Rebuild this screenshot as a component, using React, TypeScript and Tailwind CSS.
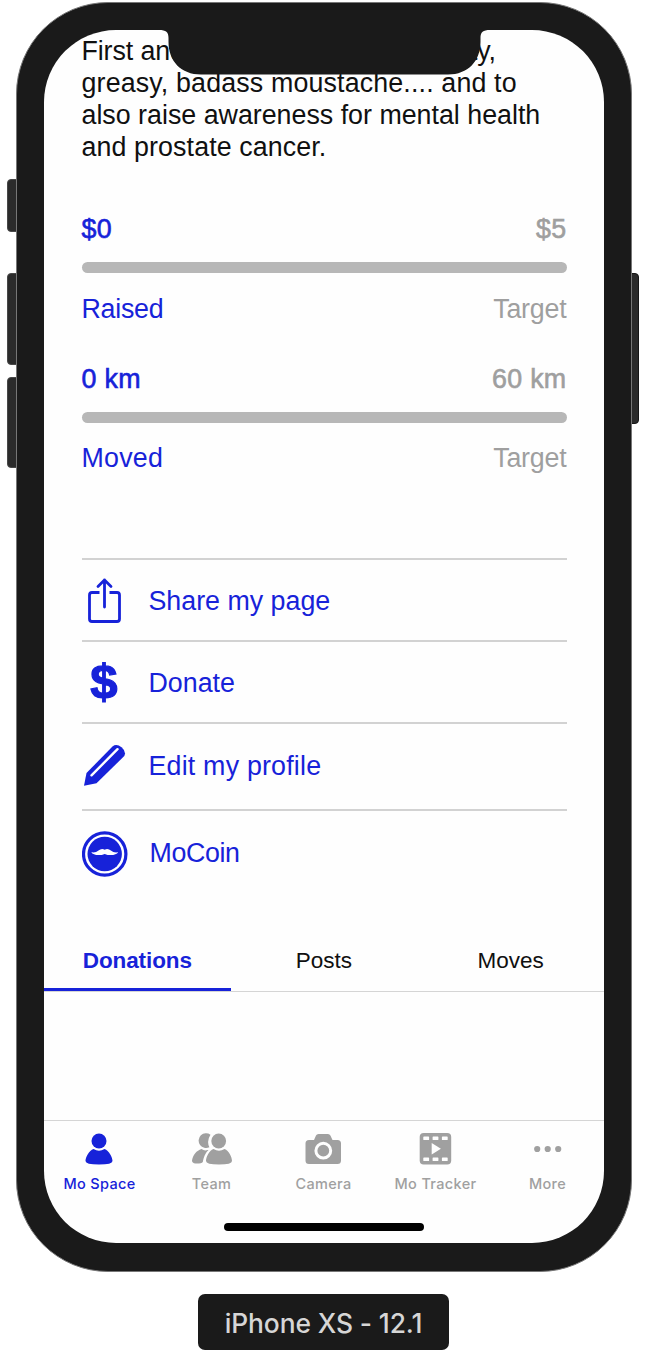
import type { ReactNode } from "react";

function Progress({ value, target, label, labelClass }: { value: string; target: string; label: string; labelClass: string }) {
  return (
    <div>
      <div className="flex h-8 justify-between leading-8 tracking-[0.300px] [-webkit-text-stroke:0.6px_currentColor]">
        <span className="text-[#1722d9]">{value}</span>
        <span className="text-[#9f9f9f]">{target}</span>
      </div>
      <div className="mt-[17px] h-[11px] rounded-full bg-[#b7b7b7]" />
      <div className="mt-[19.500px] flex h-8 justify-between leading-8">
        <span className={"text-[#1722d9] " + labelClass}>{label}</span>
        <span className="tracking-[-0.200px] text-[#9f9f9f]">Target</span>
      </div>
    </div>
  );
}

function Row({ icon, children, className }: { icon: ReactNode; children: ReactNode; className: string }) {
  return (
    <li className={"flex items-center border-t-2 border-[#d2d2d2] leading-8 " + className}>
      <span className="flex w-[67px] shrink-0">{icon}</span>
      <span>{children}</span>
    </li>
  );
}

function ShareIcon() {
  return (
    <svg width="46" height="46" viewBox="0 0 46 46" fill="none" stroke="#1722d9" strokeWidth="2.8" strokeLinecap="round" strokeLinejoin="round">
      <path d="M17.500 14.500H10a2.500 2.500 0 0 0-2.500 2.500V41a2.500 2.500 0 0 0 2.500 2.500h25a2.500 2.500 0 0 0 2.500-2.500V17a2.500 2.500 0 0 0-2.500-2.500H27.500" strokeLinecap="butt" />
      <path d="M22.500 29V2M16 8.500l6.500-6.500L29 8.500" />
    </svg>
  );
}

function PencilIcon() {
  return (
    <svg width="46" height="46" viewBox="0 0 46 46">
      <path d="M2 42.800 4.500 30 30.500 3.500Q34.500.2 39.500 4.300 44.500 8.500 42.300 13L14.500 40.300Z" fill="#1722d9" />
      <path d="M9.500 32.300 35.500 6.200" stroke="#fff" strokeWidth="2.400" strokeLinecap="round" />
    </svg>
  );
}

function CoinIcon() {
  return (
    <svg width="46" height="46" viewBox="0 0 46 46">
      <circle cx="22.700" cy="23" r="21.200" fill="#fff" stroke="#1722d9" strokeWidth="3.200" />
      <circle cx="22.700" cy="23" r="17.200" fill="#1722d9" />
      <path d="M22.700 18.800C20.500 17.600 18.500 18 16.500 19.600 14.500 21.200 12.500 21.700 9.300 21.300 10.800 24.300 18 25 22.700 22.900 27.400 25 34.600 24.300 36.100 21.300 32.900 21.700 30.900 21.200 28.900 19.600 26.900 18 24.900 17.600 22.700 18.800Z" fill="#fff" />
    </svg>
  );
}

function SpaceIcon() {
  return (
    <svg width="44" height="34" viewBox="0 0 44 34" fill="currentColor">
      <circle cx="21" cy="9" r="7.500" />
      <path d="M15.500 17Q21 20.500 26.500 17C31 18.800 34.500 25 34.500 29Q34.500 32.500 21 32.500T7.500 29C7.500 25 11 18.800 15.500 17Z" />
    </svg>
  );
}

function TeamIcon() {
  return (
    <svg width="44" height="34" viewBox="0 0 44 34" fill="currentColor">
      <path d="M20.500 2.700A7.400 7.400 0 1 0 19.400 15.200Q16.300 9 20.500 2.700Z" />
      <circle cx="28.700" cy="9" r="7.400" />
      <path d="M11.500 17Q14.500 19.200 17.500 18L18.500 18C15 21.500 14 24.500 12.800 30Q11.500 31.700 5.500 31.500 2 31.200 2 28.500C3 23 6.500 18.500 11.500 17Z" />
      <path d="M23.500 17Q29 20.500 34.500 17C39 18.800 42 25 42 29Q42 32.500 29 32.500T16 29C16 25 19 18.800 23.500 17Z" />
    </svg>
  );
}

function CameraIcon() {
  return (
    <svg width="44" height="34" viewBox="0 0 44 34">
      <path d="M7 8H12L14 3.500Q14.600 2 16.500 2H26Q27.700 2 28.400 3.500L30.500 8H35.500Q39 8 39 11.500V28.500Q39 32 35.500 32H7Q3.500 32 3.500 28.500V11.500Q3.500 8 7 8Z" fill="currentColor" />
      <circle cx="21.300" cy="18.700" r="7.400" fill="none" stroke="#fefefe" strokeWidth="3" />
    </svg>
  );
}

function FilmIcon() {
  return (
    <svg width="44" height="34" viewBox="0 0 44 34">
      <rect x="5.700" y="1" width="31.500" height="31.500" rx="4" fill="currentColor" />
      <g fill="#fefefe">
        {[9.3, 18.6, 27.900].map((x) => (
          <g key={x}>
            <rect x={x} y="4.400" width="5.800" height="3.700" rx=".7" />
            <rect x={x} y="25.400" width="5.800" height="3.700" rx=".7" />
          </g>
        ))}
        <path d="M17.700 11v11.500L26.900 16.800Z" />
      </g>
    </svg>
  );
}

function MoreIcon() {
  return (
    <svg width="44" height="34" viewBox="0 0 44 34" fill="currentColor">
      <circle cx="11.200" cy="17" r="3.100" />
      <circle cx="21.700" cy="17" r="3.100" />
      <circle cx="32.200" cy="17" r="3.100" />
    </svg>
  );
}

const navigation = [
  { label: "Mo Space", icon: <SpaceIcon />, color: "text-[#1722d9]" },
  { label: "Team", icon: <TeamIcon />, color: "text-[#a0a0a0]" },
  { label: "Camera", icon: <CameraIcon />, color: "text-[#a0a0a0]" },
  { label: "Mo Tracker", icon: <FilmIcon />, color: "text-[#a0a0a0]" },
  { label: "More", icon: <MoreIcon />, color: "text-[#a0a0a0]" },
];

export default function App() {
  return (
    <div className="flex h-[1352px] w-[648px] flex-col items-center overflow-hidden bg-white pt-[2px] font-['Liberation_Sans',Arial,sans-serif]">
      <div className="relative h-[1270px] w-[616px]">
        <div className="absolute top-[177px] -left-[9px] h-[53px] w-4 rounded-[4px] border border-[#484848] bg-[#2b2b2b]" />
        <div className="absolute top-[271px] -left-[9px] h-[92px] w-4 rounded-[4px] border border-[#484848] bg-[#2b2b2b]" />
        <div className="absolute top-[375px] -left-[9px] h-[91px] w-4 rounded-[4px] border border-[#484848] bg-[#2b2b2b]" />
        <div className="absolute top-[271px] -right-[7px] h-[151px] w-4 rounded-[4px] border border-[#161616] bg-[#2b2b2b]" />
        <div className="relative h-full w-full rounded-[92px] border border-[#777] bg-[#1a1a1a] p-[27px]">
          <main className="relative flex h-[1213px] w-[560px] flex-col overflow-hidden rounded-[72px] bg-[#fefefe]">
            <div className="px-[37.500px] pt-[5px] text-[26.800px]">
              <p className="whitespace-nowrap leading-8 text-[#101010]">
                <span className="tracking-[-0.100px]">First and foremost, to grow a nasty,</span>
                <br />
                <span className="tracking-[0.150px]">greasy, badass moustache.... and to</span>
                <br />
                also raise awareness for mental health
                <br />
                <span className="tracking-[0.100px]">and prostate cancer.</span>
              </p>
              <div className="mt-[50px] flex flex-col gap-[38px]">
                <Progress value="$0" target="$5" label="Raised" labelClass="tracking-[-0.250px]" />
                <Progress value="0 km" target="60 km" label="Moved" labelClass="tracking-[0.250px]" />
              </div>
              <ul className="mt-[84px] text-[#1722d9]">
                <Row icon={<ShareIcon />} className="h-[82px] pt-[1px]">Share my page</Row>
                <Row
                  icon={<span className="flex h-[46px] w-[45px] items-center justify-center pb-[3px] text-[49px] font-bold [-webkit-text-stroke:1.200px_currentColor]">$</span>}
                  className="h-[82px] pt-[1px]"
                >
                  Donate
                </Row>
                <Row icon={<PencilIcon />} className="h-[87px] pb-[2px]">
                  <span className="tracking-[0.200px]">Edit my profile</span>
                </Row>
                <Row icon={<CoinIcon />} className="h-[87px] pt-[1px]">
                  <span className="relative -top-[1px] left-[1px] tracking-[-0.400px]">MoCoin</span>
                </Row>
              </ul>
            </div>
            <div className="mt-[33px] grid h-[63px] grid-cols-3 border-b border-[#d5d5d5] text-center text-[22.500px] leading-[63px] text-[#101010]">
              <div className="h-[62px] border-b-[3px] border-[#1722d9] font-bold tracking-[-0.100px] text-[#1722d9]">Donations</div>
              <div className="h-[62px]">Posts</div>
              <div className="h-[62px]">Moves</div>
            </div>
            <nav className="mt-auto grid h-[123px] grid-cols-5 border-t border-[#d5d5d5] pt-[11px] font-['Inter',sans-serif] text-[14.500px] font-medium tracking-[0.350px]">
              {navigation.map(({ label, icon, color }) => (
                <div key={label} className={"flex flex-col items-center whitespace-nowrap " + color}>
                  {icon}
                  <span className="mt-2 -ml-px leading-5">{label}</span>
                </div>
              ))}
            </nav>
            <div className="absolute bottom-3 left-[180px] h-2 w-[200px] rounded-full bg-black" />
            <svg className="absolute top-0 left-[115px]" width="332" height="45" viewBox="0 0 332 45">
              <path d="M0 0C7 0 9.500 2 9.500 8V12C9.500 31 22 44.500 42 44.500H289C309 44.500 321.500 31 321.500 12V8C321.500 2 324 0 331 0Z" fill="#1a1a1a" />
            </svg>
          </main>
        </div>
      </div>
      <div className="mt-[22px] mr-px flex h-14 w-[251px] items-center justify-center rounded-[7px] bg-[#1a1a1a] pt-[3px] font-['Inter',sans-serif] text-[26.400px] font-medium tracking-[-0.100px] whitespace-nowrap text-[#d6d6d6]">
        iPhone XS - 12.1
      </div>
    </div>
  );
}
